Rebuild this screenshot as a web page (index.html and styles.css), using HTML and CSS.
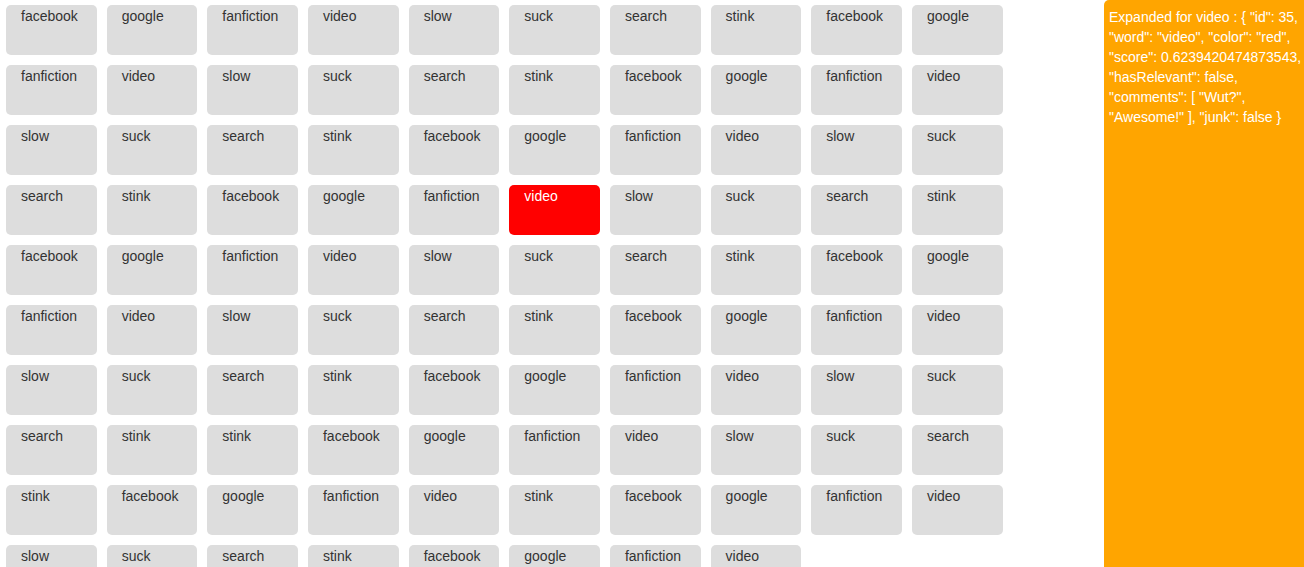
FILE: index.html
```html
<!DOCTYPE html>
<html>
<head>
<meta charset="utf-8">
<link rel="stylesheet" href="styles.css">
</head>
<body>
<div class="page">
  <main class="grid">
    <div class="tile">facebook</div><div class="tile">google</div><div class="tile">fanfiction</div><div class="tile">video</div><div class="tile">slow</div><div class="tile">suck</div><div class="tile">search</div><div class="tile">stink</div><div class="tile">facebook</div><div class="tile">google</div>
    <div class="tile">fanfiction</div><div class="tile">video</div><div class="tile">slow</div><div class="tile">suck</div><div class="tile">search</div><div class="tile">stink</div><div class="tile">facebook</div><div class="tile">google</div><div class="tile">fanfiction</div><div class="tile">video</div>
    <div class="tile">slow</div><div class="tile">suck</div><div class="tile">search</div><div class="tile">stink</div><div class="tile">facebook</div><div class="tile">google</div><div class="tile">fanfiction</div><div class="tile">video</div><div class="tile">slow</div><div class="tile">suck</div>
    <div class="tile">search</div><div class="tile">stink</div><div class="tile">facebook</div><div class="tile">google</div><div class="tile">fanfiction</div><div class="tile tile-active">video</div><div class="tile">slow</div><div class="tile">suck</div><div class="tile">search</div><div class="tile">stink</div>
    <div class="tile">facebook</div><div class="tile">google</div><div class="tile">fanfiction</div><div class="tile">video</div><div class="tile">slow</div><div class="tile">suck</div><div class="tile">search</div><div class="tile">stink</div><div class="tile">facebook</div><div class="tile">google</div>
    <div class="tile">fanfiction</div><div class="tile">video</div><div class="tile">slow</div><div class="tile">suck</div><div class="tile">search</div><div class="tile">stink</div><div class="tile">facebook</div><div class="tile">google</div><div class="tile">fanfiction</div><div class="tile">video</div>
    <div class="tile">slow</div><div class="tile">suck</div><div class="tile">search</div><div class="tile">stink</div><div class="tile">facebook</div><div class="tile">google</div><div class="tile">fanfiction</div><div class="tile">video</div><div class="tile">slow</div><div class="tile">suck</div>
    <div class="tile">search</div><div class="tile">stink</div><div class="tile">stink</div><div class="tile">facebook</div><div class="tile">google</div><div class="tile">fanfiction</div><div class="tile">video</div><div class="tile">slow</div><div class="tile">suck</div><div class="tile">search</div>
    <div class="tile">stink</div><div class="tile">facebook</div><div class="tile">google</div><div class="tile">fanfiction</div><div class="tile">video</div><div class="tile">stink</div><div class="tile">facebook</div><div class="tile">google</div><div class="tile">fanfiction</div><div class="tile">video</div>
    <div class="tile">slow</div><div class="tile">suck</div><div class="tile">search</div><div class="tile">stink</div><div class="tile">facebook</div><div class="tile">google</div><div class="tile">fanfiction</div><div class="tile">video</div>
  </main>
  <aside class="details">Expanded for video : { "id": 35, "word": "video", "color": "red", "score": 0.6239420474873543, "hasRelevant": false, "comments": [ "Wut?", "Awesome!" ], "junk": false }</aside>
</div>
</body>
</html>
```
FILE: styles.css
```css
html, body {
  margin: 0;
  padding: 0;
  background: #fff;
  font-family: "Liberation Sans", Arial, Helvetica, sans-serif;
  font-size: 14px;
}

.page {
  display: flex;
  justify-content: space-between;
  align-items: flex-start;
}

.grid {
  display: grid;
  grid-template-columns: repeat(10, 90.67px);
  grid-auto-rows: 50px;
  column-gap: 10px;
  row-gap: 10px;
  padding: 5px 0 0 6px;
}

.tile {
  background: #dddddd;
  border-radius: 5px;
  color: #333;
  line-height: 20px;
  padding: 1px 0 0 15px;
}

.tile-active {
  background: #ff0000;
  color: #fff;
}

.details {
  box-sizing: border-box;
  width: 200px;
  height: 100vh;
  background: #ffa500;
  color: #fff;
  border-top-left-radius: 5px;
  line-height: 20px;
  padding: 7px 0 0 5px;
}
```
